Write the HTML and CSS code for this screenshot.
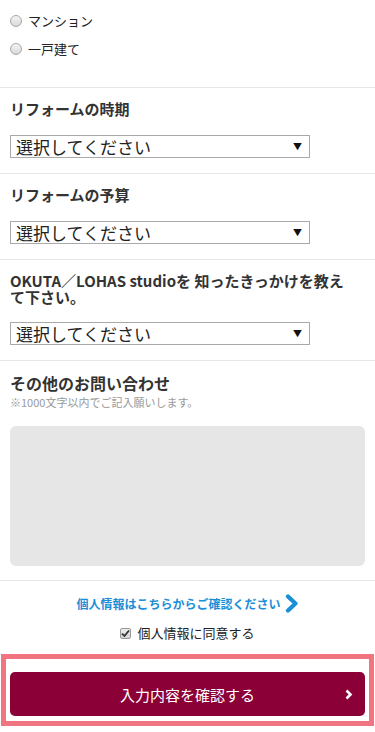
FILE: index.html
```html
<!DOCTYPE html>
<html lang="ja">
<head>
<meta charset="utf-8">
<link rel="stylesheet" href="styles.css">
</head>
<body>
<form class="form">
  <div class="radios">
    <label class="radio-row"><span class="radio"></span>マンション</label>
    <label class="radio-row"><span class="radio"></span>一戸建て</label>
  </div>

  <div class="section">
    <h3 class="q">リフォームの時期</h3>
    <div class="sel"><span>選択してください</span><span class="arrow">▼</span></div>
  </div>

  <div class="section">
    <h3 class="q">リフォームの予算</h3>
    <div class="sel"><span>選択してください</span><span class="arrow">▼</span></div>
  </div>

  <div class="section">
    <h3 class="q q-long">OKUTA／LOHAS studioを 知ったきっかけを教えて下さい。</h3>
    <div class="sel"><span>選択してください</span><span class="arrow">▼</span></div>
  </div>

  <div class="section section-msg">
    <h3 class="q q-big">その他のお問い合わせ</h3>
    <p class="note">※1000文字以内でご記入願いします。</p>
    <div class="textarea"></div>
  </div>

  <div class="section section-agree">
    <a class="privacy" href="#">個人情報はこちらからご確認ください<svg class="chev" width="14" height="19" viewBox="0 0 14 19"><path d="M3 2.5 L10.5 9.5 L3 16.5" fill="none" stroke="#1a8fd8" stroke-width="4.2" stroke-linecap="round" stroke-linejoin="round"/></svg></a>
    <label class="agree"><span class="check"><svg width="9" height="9" viewBox="0 0 9 9"><path d="M1 4.6 L3.5 7 L8 1.5" fill="none" stroke="#333" stroke-width="1.8"/></svg></span>個人情報に同意する</label>
  </div>

  <div class="submit-wrap">
    <button type="button" class="submit">入力内容を確認する<svg class="btn-chev" width="8" height="11" viewBox="0 0 8 11"><path d="M1.5 1.5 L5.5 5.5 L1.5 9.5" fill="none" stroke="#fff" stroke-width="2.6"/></svg></button>
  </div>
</form>
</body>
</html>
```

FILE: styles.css
```css
* { box-sizing: border-box; }
html, body { margin: 0; padding: 0; background: #fff; }
body {
  font-family: "Noto Sans CJK JP", "Noto Sans", sans-serif;
  color: #333;
  width: 375px;
  height: 732px;
  overflow: hidden;
}
.form { display: flex; flex-direction: column; }

.radios {
  display: flex;
  flex-direction: column;
  gap: 9px;
  padding: 11px 10px 29px;
}
.radio-row {
  display: flex;
  align-items: center;
  gap: 6px;
  font-size: 13px;
  line-height: 19px;
  color: #222;
}
.radio {
  width: 12px;
  height: 12px;
  border-radius: 50%;
  border: 1px solid #a8a8a8;
  background: linear-gradient(#f4f4f4, #d8d8d8);
}

.section {
  border-top: 1px solid #e6e6e6;
  padding: 13px 10px 15px;
}
.q {
  margin: 0 0 18px;
  font-size: 15px;
  line-height: 16px;
  font-weight: bold;
  color: #333;
}
.q-long { padding-right: 10px; margin-bottom: 17px; }
.sel {
  width: 300px;
  height: 23px;
  border: 1px solid #a9a9a9;
  display: flex;
  justify-content: space-between;
  align-items: flex-end;
  padding: 0 7px 0 5px;
  font-size: 17px;
  line-height: 20px;
  color: #222;
  overflow: hidden;
}
.arrow {
  font-size: 9px;
  align-self: center;
  line-height: 10px;
  color: #111;
}

.section-msg { padding-top: 12px; padding-bottom: 14px; }
.q-big { font-size: 16px; line-height: 20px; margin-bottom: 2px; }
.note {
  margin: 0 0 17px;
  font-size: 11px;
  line-height: 14px;
  color: #999;
}
.textarea {
  height: 140px;
  background: #e6e6e6;
  border-radius: 6px;
}

.section-agree {
  display: flex;
  flex-direction: column;
  align-items: center;
  gap: 11px;
  padding: 13px 10px 12px;
}
.privacy {
  display: flex;
  align-items: center;
  gap: 4px;
  color: #1a8fd8;
  font-size: 12px;
  font-weight: bold;
  line-height: 18px;
  text-decoration: none;
}
.agree {
  display: flex;
  align-items: center;
  gap: 6px;
  font-size: 13px;
  line-height: 18px;
  color: #222;
}
.check {
  width: 11px;
  height: 11px;
  border: 1px solid #999;
  border-radius: 2px;
  background: linear-gradient(#eee, #d4d4d4);
  display: flex;
  align-items: center;
  justify-content: center;
}

.submit-wrap {
  margin: 0 1px;
  border: 5px solid #f17580;
  padding: 13px 4px 5px;
}
.submit {
  width: 100%;
  height: 44px;
  border: 0;
  border-radius: 5px;
  background: #8b0037;
  color: #fff;
  font-family: "Noto Sans CJK JP", "Noto Sans", sans-serif;
  font-size: 15px;
  position: relative;
  display: flex;
  align-items: center;
  justify-content: center;
}
.btn-chev {
  position: absolute;
  right: 12px;
  top: 17px;
}
```
